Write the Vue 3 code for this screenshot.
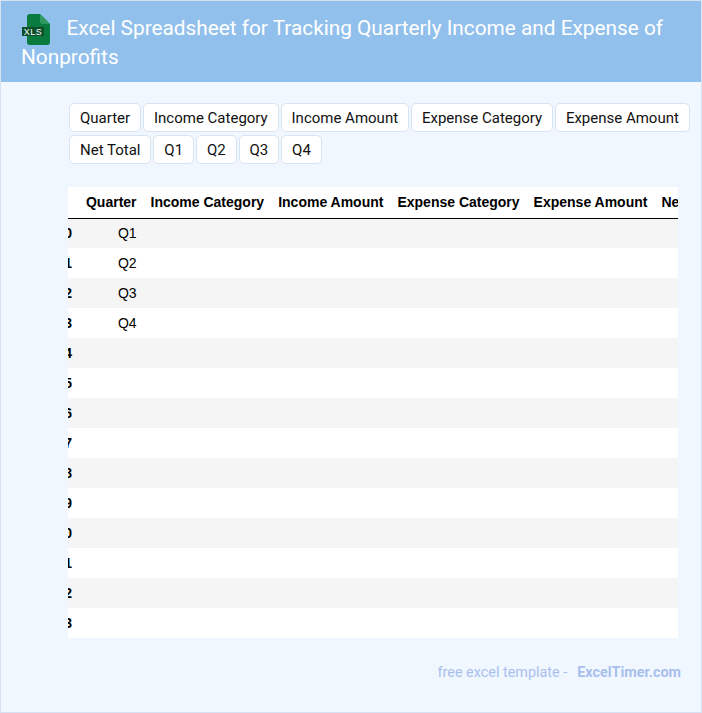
<script setup>
const filters = ['Quarter', 'Income Category', 'Income Amount', 'Expense Category', 'Expense Amount', 'Net Total', 'Q1', 'Q2', 'Q3', 'Q4']
const columns = ['Quarter', 'Income Category', 'Income Amount', 'Expense Category', 'Expense Amount', 'Net Total']
const quarters = ['Q1', 'Q2', 'Q3', 'Q4']
const rows = Array.from({ length: 14 }, (_, i) => ({ index: i, quarter: quarters[i] || '' }))
</script>

<template>
  <div class="page">
    <header class="head">
      <h1 class="title">
        <svg class="logo" width="30" height="31" viewBox="0 0 30 31" aria-hidden="true">
          <path d="M5 2.500C5 1.100 6.100 0 7.500 0H18l10 10v18.500c0 1.400-1.100 2.500-2.500 2.500h-18C6.100 31 5 29.900 5 28.500Z" fill="#0a7b3e" />
          <path d="M18 0l10 10h-7.500C19.100 10 18 8.900 18 7.500Z" fill="#2f9a62" />
          <rect x="0" y="13" width="22" height="9" fill="#0b4f2b" />
          <text x="11" y="20.800" class="logo-text" text-anchor="middle">XLS</text>
        </svg>
        Excel Spreadsheet for Tracking Quarterly Income and Expense of Nonprofits
      </h1>
    </header>
    <main class="body">
      <div class="filters">
        <button v-for="f in filters" :key="f" class="chip" type="button">{{ f }}</button>
      </div>
      <div class="table-wrap">
        <table class="grid">
          <thead>
            <tr>
              <th class="idx"></th>
              <th v-for="c in columns" :key="c">{{ c }}</th>
            </tr>
          </thead>
          <tbody>
            <tr v-for="r in rows" :key="r.index">
              <th class="idx">{{ r.index }}</th>
              <td>{{ r.quarter }}</td>
              <td></td>
              <td></td>
              <td></td>
              <td></td>
              <td></td>
            </tr>
          </tbody>
        </table>
      </div>
      <footer class="foot">
        <span>free excel template -</span>
        <strong>ExcelTimer.com</strong>
      </footer>
    </main>
  </div>
</template>

<style>
html, body { margin: 0; padding: 0; }
</style>

<style scoped>
.page {
  box-sizing: border-box;
  width: 702px;
  height: 713px;
  background: #f0f7ff;
  border: 1px solid #d5e2f2;
  overflow: hidden;
  font-family: Roboto, sans-serif;
}
.head {
  box-sizing: border-box;
  height: 81px;
  background: #92c0ec;
  padding: 13px 20px 0;
}
.title {
  margin: 0;
  font-size: 20.800px;
  font-weight: 400;
  line-height: 29px;
  color: #fff;
}
.logo {
  vertical-align: -7px;
  margin: 0 9.400px -3px 1px;
}
.logo-text {
  font-family: "Liberation Sans", sans-serif;
  font-size: 9px;
  letter-spacing: 0.5px;
  fill: #fff;
}
.body {
  padding: 21px 20px 0 67px;
}
.filters {
  display: flex;
  flex-wrap: wrap;
  gap: 3px 1.850px;
  margin-left: 1px;
  margin-right: -12px;
}
.chip {
  box-sizing: border-box;
  height: 29px;
  padding: 0 10px;
  background: #fff;
  border: 1px solid #d8e4f4;
  border-radius: 5px;
  font-family: Roboto, sans-serif;
  font-size: 15px;
  color: #111;
}
.table-wrap {
  width: 610px;
  margin-top: 23px;
  overflow: hidden;
}
.grid {
  margin-left: -18.600px;
  border-collapse: collapse;
  font-family: "Liberation Sans", sans-serif;
  font-size: 14px;
  color: #000;
  white-space: nowrap;
}
.grid thead tr {
  background: #fff;
  border-bottom: 1px solid #000;
}
.grid th, .grid td {
  height: 30px;
  padding: 0 7px;
  text-align: right;
  box-sizing: border-box;
}
.grid thead th { height: 31px; }
.grid tbody tr:nth-child(odd) { background: #f5f5f5; }
.grid tbody tr:nth-child(even) { background: #fff; }
.idx { min-width: 22px; }
.foot {
  display: flex;
  justify-content: flex-end;
  gap: 10px;
  margin-top: 25px;
  font-size: 14.400px;
  line-height: 20px;
  color: #a9bfee;
}
.foot strong { font-weight: 700; }
</style>
